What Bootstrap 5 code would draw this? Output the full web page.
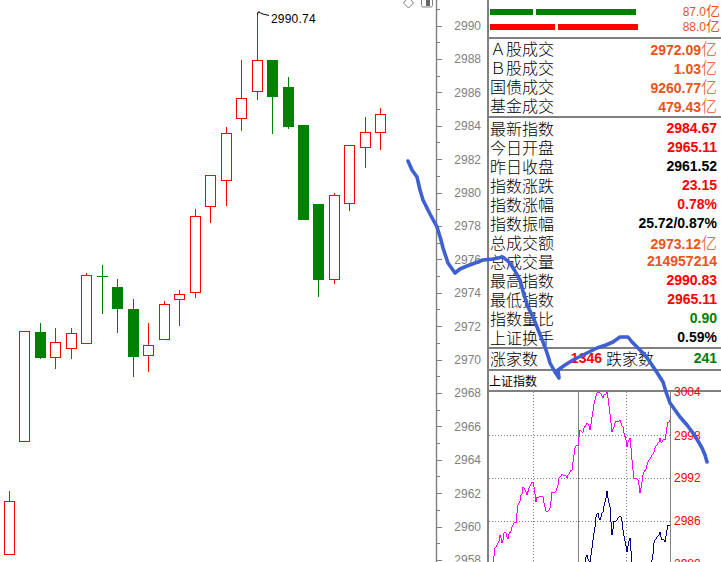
<!DOCTYPE html>
<html lang="zh">
<head>
    <meta charset="UTF-8">
    <title>上证指数</title>
    <link href="https://cdn.jsdelivr.net/npm/bootstrap@5.3.2/dist/css/bootstrap.min.css" rel="stylesheet">
    <style>
        html, body { height: 562px; overflow: hidden; background: #fff; }
        body { font-family: "Liberation Sans", "Noto Sans CJK SC", sans-serif; color: #000; position: relative; }
        svg { display: block; }
        svg text { font-family: "Liberation Sans", sans-serif; }

        .kline { width: 487px; height: 562px; flex: none; }
        .panel { width: 234px; height: 562px; flex: none; border-left: 2px solid #808080; overflow: hidden; }

        .vol-box { height: 39px; border-bottom: 2px solid #808080; padding: 1px 1px 0 1px; }
        .vol-row { height: 15px; line-height: 15px; font-size: 12px; color: #e8541a; }
        .vol-row b { font-weight: normal; font-size: 14px; }
        .bar-wrap { width: 150px; height: 6px; gap: 3px; }
        .bar-g { background: #008000; height: 6px; }
        .bar-r { background: #ff0000; height: 6px; }

        .stat-box { border-bottom: 2px solid #808080; padding: 0 4px 1px 1px; }
        .stat-box2 { padding: 1px 4px 0 1px; }
        .stat-row { height: 19px; line-height: 19px; font-size: 16px; font-family: "Noto Sans CJK SC", sans-serif; font-weight: 300; }
        .stat-row span { font-family: "Liberation Sans", "Noto Sans CJK SC", sans-serif; font-weight: 700; font-size: 14px; }
        .stat-row span i { font-style: normal; font-weight: 300; font-size: 16px; font-family: "Noto Sans CJK SC", sans-serif; }
        .c-red { color: #ff0000; }
        .c-org { color: #e8541a; }
        .c-grn { color: #008000; }

        .updown { height: 22px; line-height: 21px; border-bottom: 2px solid #808080; padding: 0 4px 0 1px; }
        .updown-l { width: 113px; }
        .updown-r { width: 112px; margin-left: 4px; }

        .mini-title { height: 21px; line-height: 20px; font-size: 12px; font-family: "Noto Sans CJK SC", sans-serif; border-bottom: 2px solid #808080; }
        .mini { width: 232px; height: 172px; overflow: visible; }

        .pen { position: absolute; left: 0; top: 0; width: 721px; height: 562px; pointer-events: none; }
    </style>
</head>

<body>
    <div class="d-flex">
        <svg id="kline" class="kline" viewBox="0 0 487 562"></svg>

        <div class="panel">
            <div class="vol-box d-flex flex-column justify-content-center">
                <div class="vol-row d-flex justify-content-between align-items-center">
                    <div class="bar-wrap d-flex"><div class="bar-g" style="width:43px"></div><div class="bar-g" style="width:100px"></div></div>
                    <div>87.0<b>亿</b></div>
                </div>
                <div class="vol-row d-flex justify-content-between align-items-center">
                    <div class="bar-wrap d-flex"><div class="bar-r" style="width:65px"></div><div class="bar-r" style="width:80px"></div></div>
                    <div>88.0<b>亿</b></div>
                </div>
            </div>

            <div class="stat-box">
                <div class="stat-row d-flex justify-content-between">Ａ股成交<span class="c-org">2972.09<i>亿</i></span></div>
                <div class="stat-row d-flex justify-content-between">Ｂ股成交<span class="c-org">1.03<i>亿</i></span></div>
                <div class="stat-row d-flex justify-content-between">国债成交<span class="c-org">9260.77<i>亿</i></span></div>
                <div class="stat-row d-flex justify-content-between">基金成交<span class="c-org">479.43<i>亿</i></span></div>
            </div>

            <div class="stat-box stat-box2">
                <div class="stat-row d-flex justify-content-between">最新指数<span class="c-red">2984.67</span></div>
                <div class="stat-row d-flex justify-content-between">今日开盘<span class="c-red">2965.11</span></div>
                <div class="stat-row d-flex justify-content-between">昨日收盘<span>2961.52</span></div>
                <div class="stat-row d-flex justify-content-between">指数涨跌<span class="c-red">23.15</span></div>
                <div class="stat-row d-flex justify-content-between">指数涨幅<span class="c-red">0.78%</span></div>
                <div class="stat-row d-flex justify-content-between">指数振幅<span>25.72/0.87%</span></div>
                <div class="stat-row d-flex justify-content-between">总成交额<span class="c-org">2973.12<i>亿</i></span></div>
                <div class="stat-row d-flex justify-content-between">总成交量<span class="c-org">214957214</span></div>
                <div class="stat-row d-flex justify-content-between">最高指数<span class="c-red">2990.83</span></div>
                <div class="stat-row d-flex justify-content-between">最低指数<span class="c-red">2965.11</span></div>
                <div class="stat-row d-flex justify-content-between">指数量比<span class="c-grn">0.90</span></div>
                <div class="stat-row d-flex justify-content-between">上证换手<span>0.59%</span></div>
            </div>

            <div class="updown d-flex">
                <div class="updown-l stat-row d-flex justify-content-between">涨家数<span class="c-red">1346</span></div>
                <div class="updown-r stat-row d-flex justify-content-between">跌家数<span class="c-grn">241</span></div>
            </div>

            <div class="mini-title">上证指数</div>

            <svg id="mini" class="mini" viewBox="489 392 232 172"></svg>
        </div>
    </div>

    <svg class="pen" viewBox="0 0 721 562">
        <polyline fill="none" stroke="#3e60d2" stroke-width="3.6" stroke-linecap="round" stroke-linejoin="round"
            points="408,161 412,170 417,177 420,190 423,200 430,214 437,227 441,240 443,248 448,263 455,273 460,269 467,266 475,263 483,260 493,259 503,257 510,263 515,271 520,280 524,295 528,307 533,317 537,327 541,337 545,347 548,356 550,363 555,372 559,378 558,370 565,365 573,360 585,354 597,348 606,345 613,342 620,337 628,337 632,342 637,347 644,354 650,362 656,371 663,382 666,392 670,403 675,410 680,417 687,425 693,433 698,441 702,448 705,455 707,462"/>
    </svg>

    <script>
        const RED = "#ff0000", GREEN = "#008000", GRAY = "#808080";

        // x = left of the body, top/bottom = body, hi/lo = wick, up = hollow red
        const candles = [
            [4, 501, 554, 491, 554, 1], [19, 331, 441, 331, 441, 1], [35, 332, 358, 323, 359, 0],
            [50, 342, 357, 328, 369, 1], [66, 333, 348, 328, 359, 1], [81, 275, 343, 273, 343, 1],
            [97, 276, 277, 265, 314, 0], [112, 287, 309, 279, 333, 0], [128, 309, 357, 299, 377, 0],
            [143, 345, 355, 323, 372, 1], [159, 304, 339, 301, 339, 1], [174, 294, 299, 290, 326, 1],
            [190, 216, 292, 209, 298, 1], [205, 175, 206, 175, 223, 1], [221, 133, 180, 127, 206, 1],
            [236, 98, 118, 60, 131, 1], [252, 60, 91, 13, 100, 1], [267, 60, 97, 60, 134, 0],
            [283, 87, 127, 77, 129, 0], [298, 125, 220, 125, 220, 0], [313, 204, 280, 204, 297, 0],
            [329, 195, 279, 193, 284, 1], [344, 145, 203, 145, 211, 1], [360, 132, 147, 117, 168, 1],
            [375, 114, 132, 108, 150, 1]
        ];

        let k = "";
        candles.forEach(([x, top, bot, hi, lo, up]) => {
            const color = up ? RED : GREEN;
            const mid = x + 5.5;
            k += `<line x1="${mid}" x2="${mid}" y1="${hi}" y2="${lo}" stroke="${color}"/>`;
            if (up) {
                k += `<rect x="${x + .5}" y="${top + .5}" width="10" height="${bot - top}" fill="#fff" stroke="${color}"/>`;
            } else {
                k += `<rect x="${x}" y="${top}" width="11" height="${bot - top}" fill="${color}"/>`;
            }
        });

        // peak marker
        k += `<path d="M257.5 15 L258 12 L260 12 M259.5 12.5 L263 14 L269 15.5" fill="none" stroke="#000"/>`;
        k += `<text x="271" y="23" font-size="12" letter-spacing=".2">2990.74</text>`;

        // axis
        k += `<line x1="436.5" x2="436.5" y1="0" y2="562" stroke="${GRAY}" stroke-width="1.4"/>`;
        for (let i = -2; i < 36; i++) {
            const y = Math.round(25.5 + i * 16.7);
            const major = i % 2 === 0;
            k += `<line x1="437" x2="${major ? 442 : 440}" y1="${y + .5}" y2="${y + .5}" stroke="${GRAY}"/>`;
        }
        for (let i = 0; i < 17; i++) {
            const y = 25.5 + i * 33.4;
            k += `<text x="481" y="${y + 4.5}" text-anchor="end" font-size="12" fill="${GRAY}">${2990 - i * 2}</text>`;
        }

        // top corner icons
        k += `<path d="M408.5 -3 L413.5 3 L408.5 8 L403.5 3 Z" fill="#fff" stroke="${GRAY}"/>`;
        k += `<rect x="421.5" y="-4" width="11" height="11" rx="1.5" fill="#fff" stroke="${GRAY}"/>`;
        k += `<rect x="426" y="-2" width="4" height="8" fill="#666"/>`;
        document.getElementById("kline").innerHTML = k;

        // mini chart lines: points read off the screenshot, then roughened to a 1px jagged trace
        const jag = (s, seed) => {
            const pts = s.trim().split(/\s+/).map(p => {
                const [a, b] = p.split(",").map(Number);
                return [430 + a / 3, 380 + b / 3];
            });
            const out = [];
            pts.forEach(([x, y], i) => {
                if (i === 0) { out.push([x, y]); return; }
                const [px, py] = pts[i - 1];
                const steps = Math.max(1, Math.round(x - px));
                for (let n = 1; n <= steps; n++) {
                    const noise = n < steps ? Math.sin((px + n) * 12.9 + seed) * 1.6 : 0;
                    out.push([Math.round(px + (x - px) * n / steps), Math.round(py + (y - py) * n / steps + noise)]);
                }
            });
            return out.map(p => p.join(",")).join(" ");
        };

        const pink = jag("190,546 195,505 205,490 210,465 215,490 220,462 228,458 235,478 245,442 258,428 265,375 272,345 280,322 292,345 296,325 308,305 318,365 322,350 338,350 348,392 360,385 367,335 380,325 385,298 400,285 410,295 425,270 435,205 445,195 450,150 460,155 470,130 480,150 495,60 505,35 520,55 530,35 545,155 555,130 570,120 580,140 590,200 600,175 607,240 612,295 625,300 630,338 640,285 650,255 675,205 690,175 695,185 705,180 715,125 720,120", 1);
        const navy1 = jag("465,546 470,525 480,546 490,480 497,410 505,400 510,420 520,395 530,332 540,380 545,465 550,430 560,420 572,410 580,450 592,515 600,475 605,546", 4);
        const navy2 = jag("665,546 672,490 690,455 695,480 705,485 715,435 720,435", 7);

        let m = "";
        [435, 478, 521].forEach(y => {
            m += `<line x1="489" x2="670" y1="${y + .5}" y2="${y + .5}" stroke="${GRAY}" stroke-dasharray="1 2"/>`;
        });
        [533, 626].forEach(x => {
            m += `<line x1="${x + .5}" x2="${x + .5}" y1="392" y2="562" stroke="${GRAY}" stroke-dasharray="1 2"/>`;
        });
        m += `<line x1="578.5" x2="578.5" y1="392" y2="562" stroke="${GRAY}"/>`;
        m += `<line x1="670.5" x2="670.5" y1="392" y2="562" stroke="${GRAY}"/>`;
        m += `<polyline points="${pink}" fill="none" stroke="#ff00ff" shape-rendering="crispEdges"/>`;
        m += `<polyline points="${navy1}" fill="none" stroke="#000080" shape-rendering="crispEdges"/>`;
        m += `<polyline points="${navy2}" fill="none" stroke="#000080" shape-rendering="crispEdges"/>`;
        [[3004, 396], [2998, 440], [2992, 482], [2986, 525], [2980, 568]].forEach(([v, y]) => {
            m += `<text x="674" y="${y}" font-size="12" fill="${RED}">${v}</text>`;
        });
        document.getElementById("mini").innerHTML = m;
    </script>

    <script src="https://cdn.jsdelivr.net/npm/bootstrap@5.3.2/dist/js/bootstrap.bundle.min.js"></script>
</body>
</html>
